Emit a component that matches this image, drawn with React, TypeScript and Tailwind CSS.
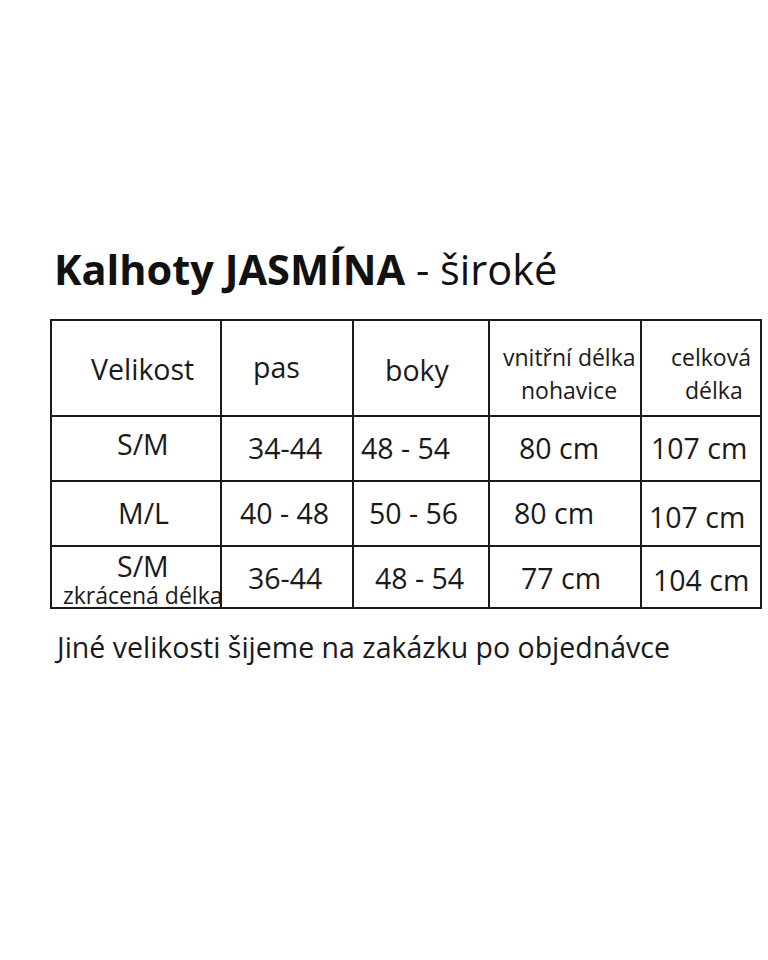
import React from 'react';

type Cell = {
  lines: { text: string; cls: string }[];
  pad: string;
};

const header: Cell[] = [
  { lines: [{ text: 'Velikost', cls: 'text-[28.5px] leading-tight' }], pad: 'pl-[39px] pt-[4px]' },
  { lines: [{ text: 'pas', cls: 'text-[28.5px] leading-tight' }], pad: 'pl-[31px] pt-[0px]' },
  { lines: [{ text: 'boky', cls: 'text-[28.5px] leading-tight' }], pad: 'pl-[31px] pt-[6px]' },
  {
    lines: [
      { text: 'vnitřní délka', cls: 'text-[23px] leading-[33px] pl-[13px] whitespace-nowrap' },
      { text: 'nohavice', cls: 'text-[23px] leading-[33px] pl-[31px]' },
    ],
    pad: 'pt-[11px]',
  },
  {
    lines: [
      { text: 'celková', cls: 'text-[23px] leading-[33px] pl-[29px]' },
      { text: 'délka', cls: 'text-[23px] leading-[33px] pl-[43px]' },
    ],
    pad: 'pt-[11px]',
  },
];

const rows: { h: string; cells: Cell[] }[] = [
  {
    h: 'h-[63px]',
    cells: [
      { lines: [{ text: 'S/M', cls: 'text-[28.5px] leading-tight' }], pad: 'pl-[65px] pb-[8px]' },
      { lines: [{ text: '34-44', cls: 'text-[28.5px] leading-tight' }], pad: 'pl-[26px]' },
      { lines: [{ text: '48 - 54', cls: 'text-[28.5px] leading-tight' }], pad: 'pl-[7px]' },
      { lines: [{ text: '80 cm', cls: 'text-[28.5px] leading-tight' }], pad: 'pl-[29px]' },
      { lines: [{ text: '107 cm', cls: 'text-[28.5px] leading-tight' }], pad: 'pl-[9px]' },
    ],
  },
  {
    h: 'h-[63px]',
    cells: [
      { lines: [{ text: 'M/L', cls: 'text-[28.5px] leading-tight' }], pad: 'pl-[66px]' },
      { lines: [{ text: '40 - 48', cls: 'text-[28.5px] leading-tight' }], pad: 'pl-[18px]' },
      { lines: [{ text: '50 - 56', cls: 'text-[28.5px] leading-tight' }], pad: 'pl-[15px]' },
      { lines: [{ text: '80 cm', cls: 'text-[28.5px] leading-tight' }], pad: 'pl-[24px]' },
      { lines: [{ text: '107 cm', cls: 'text-[28.5px] leading-tight' }], pad: 'pl-[7px] pt-[8px]' },
    ],
  },
  {
    h: 'h-[60px]',
    cells: [
      {
        lines: [
          { text: 'S/M', cls: 'text-[28.5px] leading-[30px] pl-[65px]' },
          { text: 'zkrácená délka', cls: 'text-[23px] leading-[28px] pl-[11px] whitespace-nowrap' },
        ],
        pad: 'pt-[5px]',
      },
      { lines: [{ text: '36-44', cls: 'text-[28.5px] leading-tight' }], pad: 'pl-[26px] pt-[4px]' },
      { lines: [{ text: '48 - 54', cls: 'text-[28.5px] leading-tight' }], pad: 'pl-[21px] pt-[4px]' },
      { lines: [{ text: '77 cm', cls: 'text-[28.5px] leading-tight' }], pad: 'pl-[31px] pt-[4px]' },
      { lines: [{ text: '104 cm', cls: 'text-[28.5px] leading-tight' }], pad: 'pl-[11px] pt-[8px]' },
    ],
  },
];

function CellView({ cell, h }: { cell: Cell; h: string }) {
  return (
    <div className={`bg-white flex flex-col justify-center overflow-visible ${h} ${cell.pad}`}>
      {cell.lines.map((l, i) => (
        <div key={i} className={`text-[#1a1a1a] ${l.cls}`}>
          {l.text}
        </div>
      ))}
    </div>
  );
}

export default function App() {
  return (
    <div className="w-[768px] h-[960px] bg-white" style={{ fontFamily: '"Open Sans", sans-serif' }}>
      <div className="pt-[242px] pl-[54px]">
        <h1 className="text-[41.5px] leading-[54px] text-[#111]">
          <span className="font-bold">Kalhoty JASMÍNA</span>
          <span> - široké</span>
        </h1>
      </div>

      <div className="ml-[50px] mt-[23px] w-[712px] grid grid-cols-[168px_130px_134px_150px_118px] gap-[2px] bg-[#1a1a1a] p-[2px]">
        {header.map((c, i) => (
          <CellView key={i} cell={c} h="h-[94px]" />
        ))}
        {rows.map((r) => r.cells.map((c, i) => <CellView key={r.h + i + c.lines[0].text} cell={c} h={r.h} />))}
      </div>

      <p className="pl-[57px] pt-[18px] text-[28.5px] leading-[40px] text-[#1a1a1a]">
        Jiné velikosti šijeme na zakázku po objednávce
      </p>
    </div>
  );
}
